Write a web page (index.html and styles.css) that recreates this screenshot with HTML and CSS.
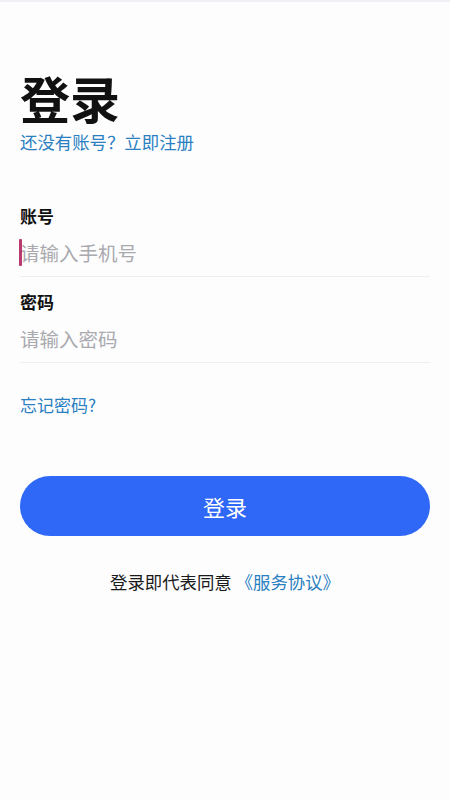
FILE: index.html
```html
<!DOCTYPE html>
<html lang="zh-CN">
<head>
<meta charset="utf-8">
<link rel="stylesheet" href="styles.css">
</head>
<body>
<div class="page">
  <h1 class="title">登录</h1>
  <div class="register"><span class="link">还没有账号？立即注册</span></div>
  <div class="field first">
    <div class="label">账号</div>
    <div class="input"><span class="cursor"></span><span class="ph">请输入手机号</span></div>
  </div>
  <div class="field">
    <div class="label">密码</div>
    <div class="input"><span class="ph">请输入密码</span></div>
  </div>
  <div class="forgot"><span class="link">忘记密码?</span></div>
  <div class="btn">登录</div>
  <div class="agree">登录即代表同意 <span class="link">《服务协议》</span></div>
</div>
</body>
</html>
```
FILE: styles.css
```css
html, body {
  margin: 0;
  padding: 0;
  background: #fdfdfe;
}
body {
  font-family: "Noto Sans CJK SC", "Noto Sans", sans-serif;
  color: #111;
  border-top: 2px solid #f1f0f4;
}
.page {
  padding: 0 20px;
}
.title {
  margin: 0;
  padding-top: 67px;
  font-size: 50px;
  line-height: 56px;
  font-weight: 700;
}
.link {
  color: #2a7fc1;
}
.register {
  font-size: 17.4px;
  line-height: 26px;
  margin-top: 4px;
}
.field {
  padding-bottom: 12px;
}
.field.first {
  margin-top: 48px;
}
.label {
  font-size: 17px;
  font-weight: 700;
  line-height: 26px;
}
.input {
  display: flex;
  align-items: center;
  height: 47px;
  border-bottom: 1px solid #eeedf0;
  position: relative;
}
.cursor {
  position: absolute;
  left: -1px;
  top: 10px;
  width: 3px;
  height: 27px;
  background: #b83a6e;
  border-radius: 1px;
}
.ph {
  color: #a9a9ae;
  font-size: 19.5px;
  line-height: 30px;
}
.forgot {
  font-size: 17px;
  line-height: 26px;
  margin-top: 17px;
}
.btn {
  margin-top: 58px;
  height: 60px;
  border-radius: 30px;
  background: #2f67f6;
  color: #fff;
  font-size: 22px;
  display: flex;
  align-items: center;
  justify-content: center;
}
.agree {
  margin-top: 33px;
  text-align: center;
  font-size: 17.4px;
  line-height: 26px;
  color: #1a1a1a;
}
```
